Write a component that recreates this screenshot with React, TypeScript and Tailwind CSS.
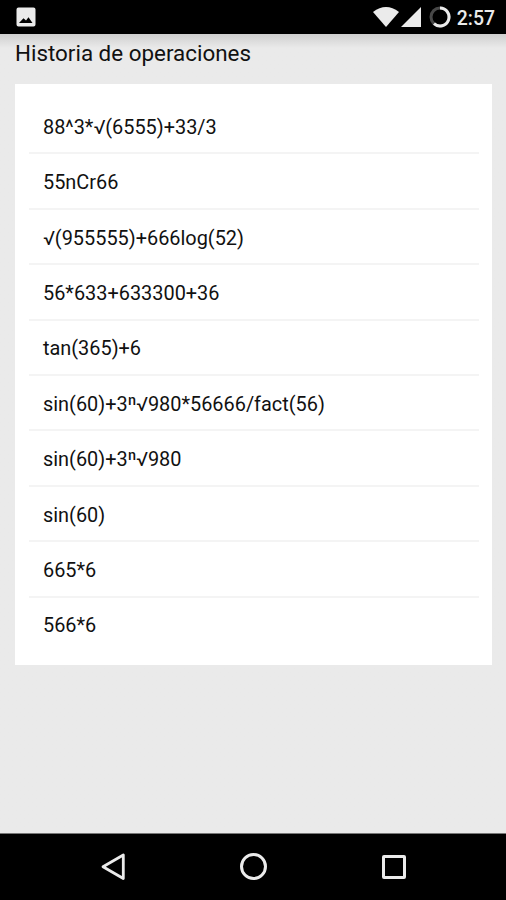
import React from 'react';

const operations = [
  '88^3*√(6555)+33/3',
  '55nCr66',
  '√(955555)+666log(52)',
  '56*633+633300+36',
  'tan(365)+6',
  'sin(60)+3ⁿ√980*56666/fact(56)',
  'sin(60)+3ⁿ√980',
  'sin(60)',
  '665*6',
  '566*6'
];

const StatusBar: React.FC = () => (
  <header className="flex h-[34px] shrink-0 items-center justify-between bg-black pl-4 pr-[11px] text-[#ebebeb]">
    <svg width="20" height="20" viewBox="0 0 20 20">
      <path
        fillRule="evenodd"
        fill="currentColor"
        d="M2.500 0.500h15a2 2 0 0 1 2 2v15a2 2 0 0 1-2 2h-15a2 2 0 0 1-2-2v-15a2 2 0 0 1 2-2zM3 16h13.500l-4-5.800-2.500 3.300-2.500-2.200z"
      />
    </svg>
    <div className="flex items-center">
      <svg width="26" height="20" viewBox="0 0 26 20">
        <path fill="currentColor" d="M0 5Q13-5 26 5L13 20z" />
      </svg>
      <svg className="ml-[2px]" width="20" height="20" viewBox="0 0 20 20">
        <path fill="currentColor" d="M0 20L20 0V20z" />
      </svg>
      <svg className="ml-2" width="22" height="22" viewBox="0 0 22 22" fill="none" strokeWidth="3">
        <circle cx="11" cy="11" r="9" stroke="#484848" />
        <path stroke="currentColor" d="M11 2A9 9 0 1 1 5 17.700" />
      </svg>
      <span className="ml-[6px] pt-[3px] text-[19.400px] font-medium leading-none">2:57</span>
    </div>
  </header>
);

const NavigationBar: React.FC = () => (
  <nav className="flex h-[67px] shrink-0 items-center justify-between border-t border-[#777] bg-black px-[99px] text-[#ebebeb]">
    <svg width="28" height="30" viewBox="0 0 28 30" fill="none" stroke="currentColor" strokeWidth="2.800">
      <path strokeLinejoin="round" d="M24.300 3V26.500L4 14.700z" />
    </svg>
    <svg width="28" height="28" viewBox="0 0 28 28" fill="none" stroke="currentColor" strokeWidth="3">
      <circle cx="13.500" cy="13.500" r="12" />
    </svg>
    <svg width="26" height="26" viewBox="0 0 26 26" fill="none" stroke="currentColor" strokeWidth="3">
      <rect x="2.500" y="2.500" width="21" height="21" rx="0.500" />
    </svg>
  </nav>
);

const App: React.FC = () => {
  return (
    <div className="flex h-[900px] w-[506px] flex-col overflow-hidden bg-[#eaeaea] font-[Roboto,'Noto_Sans',sans-serif] text-[#111]">
      <StatusBar />
      <main className="flex-1 bg-linear-to-b from-[#cfcfcf] to-[#eaeaea] to-[14px] pl-[15px] pr-[14px]">
        <h1 className="h-[50px] pt-[5px] text-[22.400px] leading-[28px]">Historia de operaciones</h1>
        <ul className="h-[581px] bg-white pl-[14px] pr-[13px] pt-[15px]">
          {operations.map((operation) => (
            <li
              key={operation}
              className="flex h-[55.400px] items-center border-b-2 border-[#f4f4f4] pl-[14px] pt-[4px] text-[19.900px] last:border-b-0 last:pb-[2px]"
            >
              {operation}
            </li>
          ))}
        </ul>
      </main>
      <NavigationBar />
    </div>
  );
};

export default App;
